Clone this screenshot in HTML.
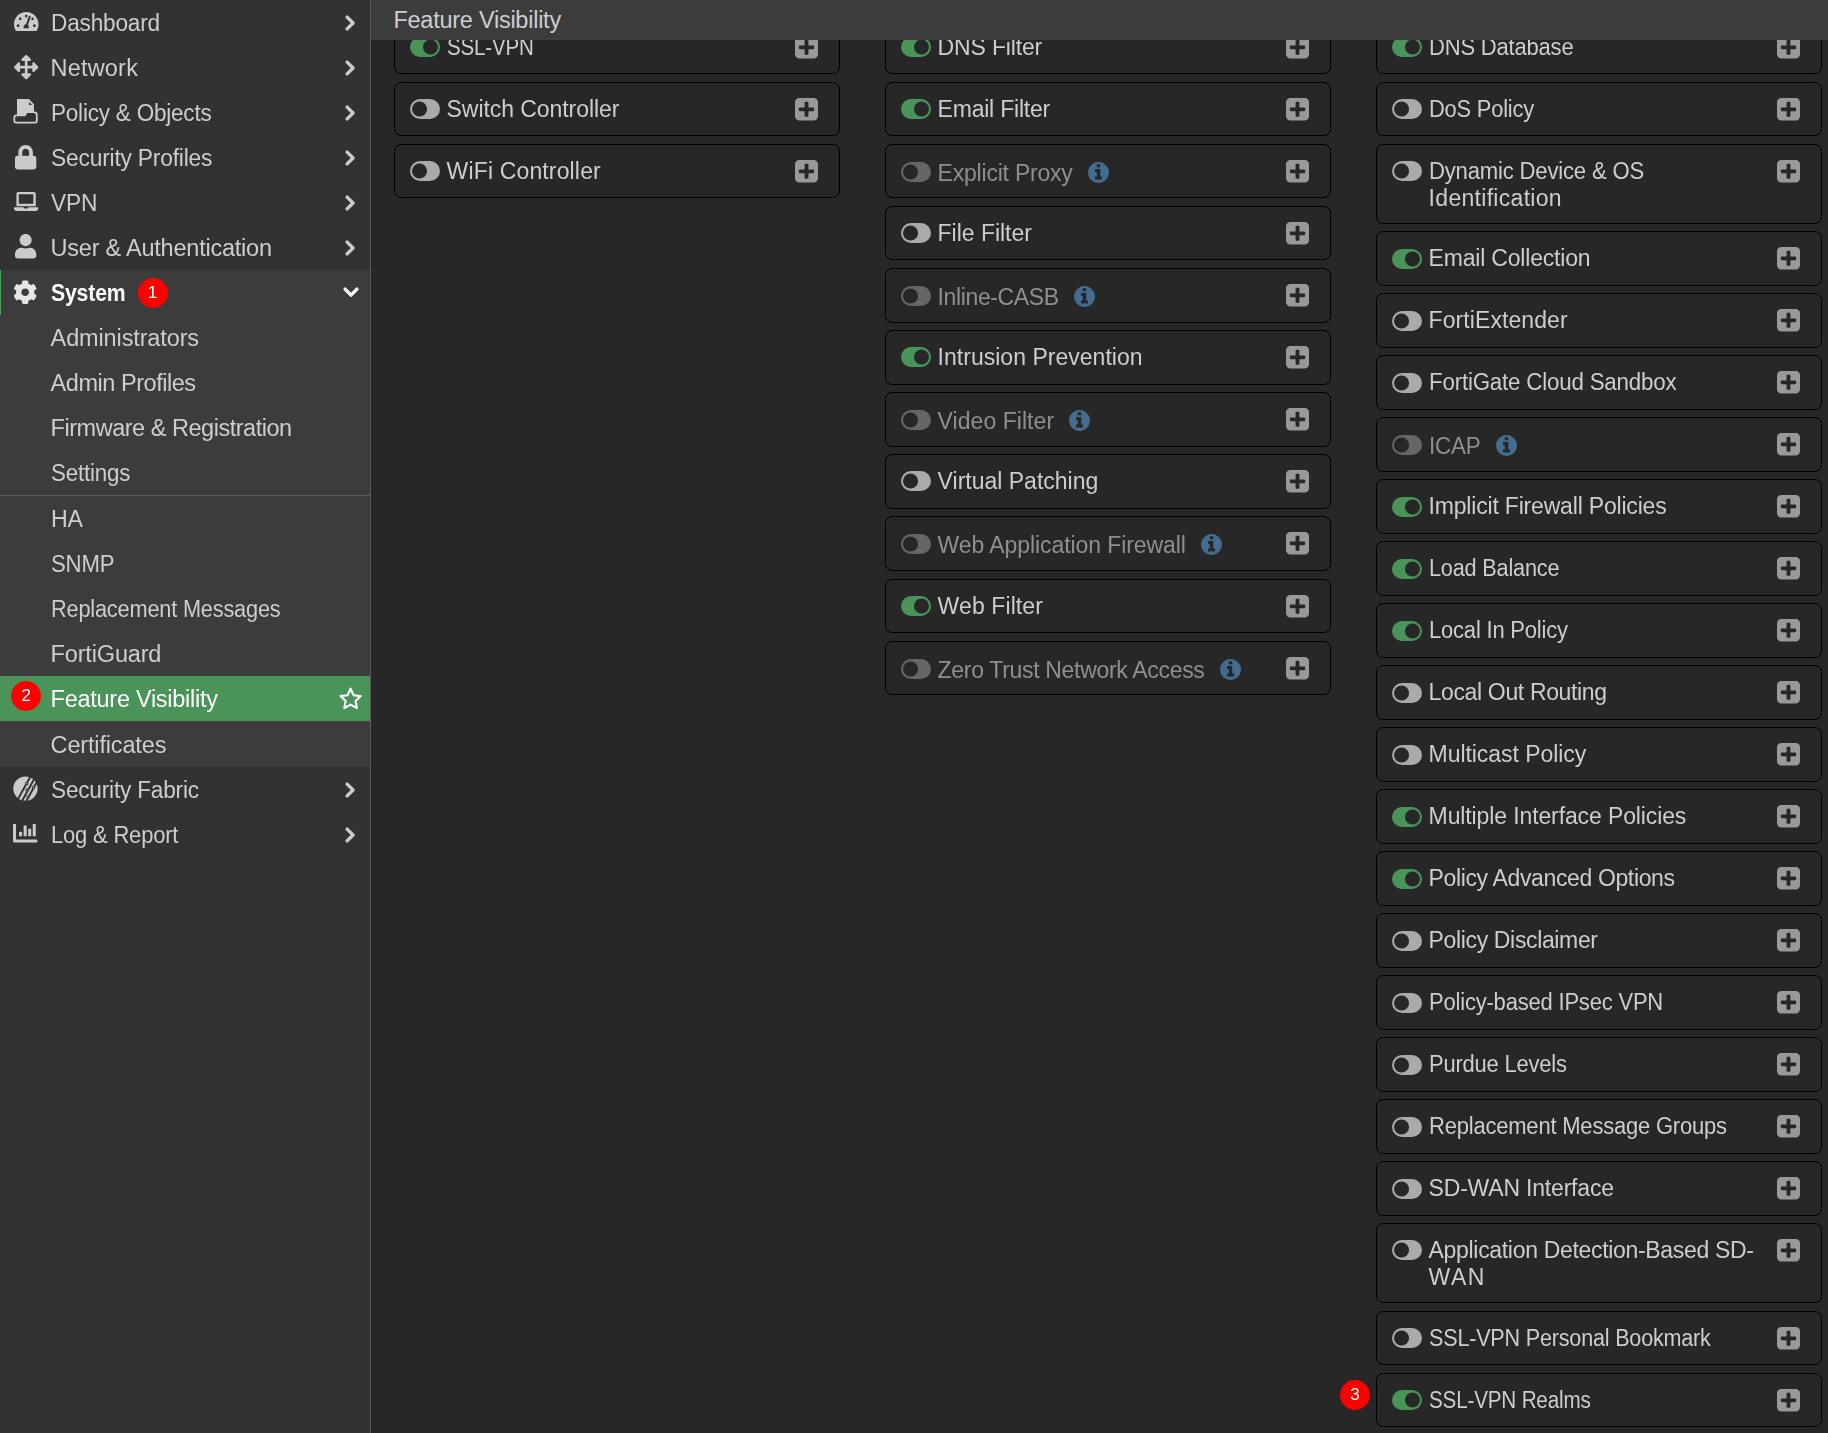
<!DOCTYPE html>
<html lang="en"><head><meta charset="utf-8"><title>Feature Visibility</title>
<style>
html,body{margin:0;padding:0}
body{width:1828px;height:1433px;overflow:hidden;background:#272727;position:relative;font-family:"Liberation Sans",sans-serif;font-size:23px;color:#cdcdcd}
.n,.nb,.h{font-size:23.5px}
.c{font-size:23px}
.ic{position:absolute;display:block;overflow:visible}
#side{position:absolute;left:0;top:0;width:370px;height:1433px;background:#323232;border-right:1px solid #595959;will-change:transform}
#main{position:absolute;left:0;top:0;width:1828px;height:1433px;will-change:transform}
.nav{position:absolute;left:0;width:370px;height:45px;line-height:45px;white-space:nowrap}
.nav .t{position:absolute;left:50.6px;top:1px}
.t{display:inline-block;white-space:nowrap;transform-origin:0 50%}
#subbg{position:absolute;left:0;top:270px;width:370px;height:497px;background:#3c3c3c}
#sysbar{position:absolute;left:0;top:270px;width:1px;height:45px;background:#4aa35f}
#sel{position:absolute;left:0;top:676px;width:370px;height:45px;background:#4a945a}
#selb{position:absolute;left:0;top:721px;width:370px;height:1px;background:#474747}
#div{position:absolute;left:0;top:495px;width:370px;height:1px;background:#5c5c5c}
.badge{position:absolute;width:30px;height:30px;border-radius:15px;background:#fe0000;color:#fff;font-size:17px;line-height:30px;text-align:center}
#hdr{position:absolute;left:371px;top:0;width:1457px;height:40px;background:#3c3c3c;z-index:5}
#side{z-index:4}
#hdr .t{position:absolute;left:22.4px;top:1px;line-height:39px;color:#cdcdcd}
.card{position:absolute;width:446px;border:1px solid #000;border-radius:7px;box-sizing:border-box}
.card .lbl{position:absolute;left:51.6px;top:13px;line-height:27px}
.card .ml .t{display:block}
.card.dis .lbl{color:#8f8f8f;top:15px}
.card.dis .tg{top:17px}
.card.k3 .tg{top:17px}
.tg{position:absolute;left:15px;top:16px;width:30px;height:20px;border-radius:10px;background:#aaa;box-sizing:border-box}
.tg i{position:absolute;left:2px;top:2px;width:16px;height:16px;border-radius:8px;background:#272727;transform:scale(.94);transform-origin:3% 50%}
.tg.on{background:#4a945a}
.tg.on i{left:12px;transform-origin:97% 50%}
.dis .tg{background:#666}
</style></head><body>

<div id="side">
<div id="subbg"></div><div id="sysbar"></div><div id="sel"></div><div id="selb"></div><div id="div"></div>
<div class="nav" style="top:0px"><span class="t n" style="letter-spacing:-0.200px;transform:scaleX(0.9625)">Dashboard</span></div>
<svg class="ic" style="left:13.8px;top:11.9px;width:24.5px;height:19.1px" viewBox="0 32 576 448" preserveAspectRatio="none"><path fill="#cbcbcb" d="M288 32C128.94 32 0 160.94 0 320c0 52.8 14.25 102.26 39.06 144.8 5.61 9.62 16.3 15.2 27.44 15.2h443c11.14 0 21.83-5.58 27.44-15.2C561.75 422.26 576 372.8 576 320c0-159.06-128.94-288-288-288zm0 64c14.71 0 26.58 10.13 30.32 23.65-1.11 2.26-2.64 4.23-3.45 6.67l-9.22 27.67c-5.13 3.49-10.97 6.01-17.64 6.01-17.67 0-32-14.33-32-32S270.33 96 288 96zM96 384c-17.67 0-32-14.33-32-32s14.33-32 32-32 32 14.33 32 32-14.33 32-32 32zm48-160c-17.67 0-32-14.33-32-32s14.33-32 32-32 32 14.33 32 32-14.33 32-32 32zm246.77-72.41l-61.33 184C343.13 347.33 352 364.54 352 384c0 11.72-3.38 22.55-8.88 32H232.88c-5.5-9.45-8.88-20.28-8.88-32 0-33.94 26.5-61.43 59.9-63.59l61.34-184.01c4.17-12.56 17.73-19.45 30.36-15.17 12.57 4.19 19.35 17.79 15.17 30.36zm14.66 57.2l15.52-46.55c3.47-1.29 7.13-2.23 11.05-2.23 17.67 0 32 14.33 32 32s-14.33 32-32 32c-11.38-.01-20.89-6.28-26.57-15.22zM480 384c-17.67 0-32-14.33-32-32s14.33-32 32-32 32 14.33 32 32-14.33 32-32 32z"/></svg>
<svg class="ic" style="left:345.3px;top:14.5px;width:10.4px;height:16px" viewBox="0 0 10.4 16" preserveAspectRatio="none"><path d="M2.1 2.1L8.1 8L2.1 13.9" fill="none" stroke="#cbcbcb" stroke-width="3.4" stroke-linecap="round" stroke-linejoin="round"/></svg>
<div class="nav" style="top:45px"><span class="t n" style="letter-spacing:0.183px">Network</span></div>
<svg class="ic" style="left:13.8px;top:54.5px;width:24.4px;height:24.4px" viewBox="0 0 512 512" preserveAspectRatio="none"><path fill="#cbcbcb" d="M352.201 425.775l-79.196 79.196c-9.373 9.373-24.568 9.373-33.941 0l-79.196-79.196c-15.119-15.119-4.411-40.971 16.971-40.97h51.162L228 284H127.196v51.162c0 21.382-25.851 32.09-40.971 16.971L7.029 272.937c-9.373-9.373-9.373-24.569 0-33.941L86.225 159.8c15.119-15.119 40.971-4.411 40.971 16.971V228H228V127.196h-51.23c-21.382 0-32.09-25.851-16.971-40.971l79.196-79.196c9.373-9.373 24.568-9.373 33.941 0l79.196 79.196c15.119 15.119 4.411 40.971-16.971 40.971h-51.162V228h100.804v-51.162c0-21.382 25.851-32.09 40.97-16.971l79.196 79.196c9.373 9.373 9.373 24.569 0 33.941L425.773 352.2c-15.119 15.119-40.971 4.411-40.97-16.971V284H284v100.804h51.23c21.382 0 32.09 25.851 16.971 40.971z"/></svg>
<svg class="ic" style="left:345.3px;top:59.5px;width:10.4px;height:16px" viewBox="0 0 10.4 16" preserveAspectRatio="none"><path d="M2.1 2.1L8.1 8L2.1 13.9" fill="none" stroke="#cbcbcb" stroke-width="3.4" stroke-linecap="round" stroke-linejoin="round"/></svg>
<div class="nav" style="top:90px"><span class="t n" style="letter-spacing:-0.200px;transform:scaleX(0.9560)">Policy &amp; Objects</span></div>
<svg class="ic" style="left:5px;top:92px;width:40px;height:40px" viewBox="0 0 40 40" preserveAspectRatio="none"><path fill="#cbcbcb" fill-rule="evenodd" d="M12 7H24L29 12.2V21H22.4L20.3 24.3H12Z M24.1 9.9V12.9H27.1Z"/><path fill="none" stroke="#cbcbcb" stroke-width="1.8" stroke-linejoin="round" d="M12.2 23.3H11.6A2.3 2.3 0 0 0 9.3 25.6V28.4A2.3 2.3 0 0 0 11.6 30.7H29.5A2.3 2.3 0 0 0 31.8 28.4V22.8A2.3 2.3 0 0 0 29.5 20.5H29"/></svg>
<svg class="ic" style="left:345.3px;top:104.5px;width:10.4px;height:16px" viewBox="0 0 10.4 16" preserveAspectRatio="none"><path d="M2.1 2.1L8.1 8L2.1 13.9" fill="none" stroke="#cbcbcb" stroke-width="3.4" stroke-linecap="round" stroke-linejoin="round"/></svg>
<div class="nav" style="top:135px"><span class="t n" style="letter-spacing:-0.200px;transform:scaleX(0.9693)">Security Profiles</span></div>
<svg class="ic" style="left:15px;top:144.8px;width:21.3px;height:24.4px" viewBox="0 0 448 512" preserveAspectRatio="none"><path fill="#cbcbcb" d="M400 224h-24v-72C376 68.2 307.8 0 224 0S72 68.2 72 152v72H48c-26.5 0-48 21.5-48 48v192c0 26.5 21.5 48 48 48h352c26.5 0 48-21.5 48-48V272c0-26.5-21.5-48-48-48zm-104 0H152v-72c0-39.7 32.3-72 72-72s72 32.3 72 72v72z"/></svg>
<svg class="ic" style="left:345.3px;top:149.5px;width:10.4px;height:16px" viewBox="0 0 10.4 16" preserveAspectRatio="none"><path d="M2.1 2.1L8.1 8L2.1 13.9" fill="none" stroke="#cbcbcb" stroke-width="3.4" stroke-linecap="round" stroke-linejoin="round"/></svg>
<div class="nav" style="top:180px"><span class="t n" style="letter-spacing:-0.200px;transform:scaleX(0.9675)">VPN</span></div>
<svg class="ic" style="left:13.5px;top:191.7px;width:24.2px;height:18.9px" viewBox="0 0 640 512" preserveAspectRatio="none"><path fill="#cbcbcb" d="M624 416H381.54c-.74 19.81-14.71 32-32.74 32H288c-18.69 0-33.02-17.47-32.77-32H16c-8.8 0-16 7.2-16 16v16c0 35.2 28.8 64 64 64h512c35.2 0 64-28.8 64-64v-16c0-8.8-7.2-16-16-16zM576 48c0-26.4-21.6-48-48-48H112C85.6 0 64 21.6 64 48v336h512V48zm-64 272H128V64h384v256z"/></svg>
<svg class="ic" style="left:345.3px;top:194.5px;width:10.4px;height:16px" viewBox="0 0 10.4 16" preserveAspectRatio="none"><path d="M2.1 2.1L8.1 8L2.1 13.9" fill="none" stroke="#cbcbcb" stroke-width="3.4" stroke-linecap="round" stroke-linejoin="round"/></svg>
<div class="nav" style="top:225px"><span class="t n" style="letter-spacing:-0.230px">User &amp; Authentication</span></div>
<svg class="ic" style="left:15px;top:234px;width:21.3px;height:24.4px" viewBox="0 0 448 512" preserveAspectRatio="none"><path fill="#cbcbcb" d="M224 256c70.7 0 128-57.3 128-128S294.7 0 224 0 96 57.3 96 128s57.3 128 128 128zm89.6 32h-16.7c-22.2 10.2-46.9 16-72.9 16s-50.6-5.8-72.9-16h-16.7C60.2 288 0 348.2 0 422.4V464c0 26.5 21.5 48 48 48h352c26.5 0 48-21.5 48-48v-41.6c0-74.2-60.2-134.4-134.4-134.4z"/></svg>
<svg class="ic" style="left:345.3px;top:239.5px;width:10.4px;height:16px" viewBox="0 0 10.4 16" preserveAspectRatio="none"><path d="M2.1 2.1L8.1 8L2.1 13.9" fill="none" stroke="#cbcbcb" stroke-width="3.4" stroke-linecap="round" stroke-linejoin="round"/></svg>
<div class="nav" style="top:270px;color:#fff;font-weight:bold"><span class="t nb" style="letter-spacing:-0.200px;transform:scaleX(0.9035)">System</span></div>
<svg class="ic" style="left:13.3px;top:279.5px;width:24.4px;height:24.4px" viewBox="0 0 512 512" preserveAspectRatio="none"><path fill="#e6e6e6" d="M487.4 315.7l-42.6-24.6c4.3-23.2 4.3-47 0-70.2l42.6-24.6c4.9-2.8 7.1-8.6 5.5-14-11.1-35.6-30-67.8-54.7-94.6-3.8-4.1-10-5.1-14.8-2.3L380.8 110c-17.9-15.4-38.5-27.3-60.8-35.1V25.8c0-5.6-3.9-10.5-9.4-11.7-36.7-8.2-74.3-7.8-109.2 0-5.5 1.2-9.4 6.1-9.4 11.7V75c-22.2 7.9-42.8 19.8-60.8 35.1L88.7 85.5c-4.9-2.8-11-1.9-14.8 2.3-24.7 26.7-43.6 58.9-54.7 94.6-1.7 5.4.6 11.2 5.5 14L67.3 221c-4.3 23.2-4.3 47 0 70.2l-42.6 24.6c-4.9 2.8-7.1 8.6-5.5 14 11.1 35.6 30 67.8 54.7 94.6 3.8 4.1 10 5.1 14.8 2.3l42.6-24.6c17.9 15.4 38.5 27.3 60.8 35.1v49.2c0 5.6 3.9 10.5 9.4 11.7 36.7 8.2 74.3 7.8 109.2 0 5.5-1.2 9.4-6.1 9.4-11.7v-49.2c22.2-7.9 42.8-19.8 60.8-35.1l42.6 24.6c4.9 2.8 11 1.9 14.8-2.3 24.7-26.7 43.6-58.9 54.7-94.6 1.5-5.5-.7-11.3-5.6-14.1zM256 336c-44.1 0-80-35.9-80-80s35.9-80 80-80 80 35.9 80 80-35.9 80-80 80z"/></svg>
<svg class="ic" style="left:342.5px;top:287.4px;width:16px;height:10.4px" viewBox="0 0 16 10.4" preserveAspectRatio="none"><path d="M2.1 2.1L8 8.1L13.9 2.1" fill="none" stroke="#fff" stroke-width="3.4" stroke-linecap="round" stroke-linejoin="round"/></svg>
<div class="badge" style="left:137.6px;top:277.5px">1</div>
<div class="nav" style="top:315px"><span class="t n" style="letter-spacing:-0.130px">Administrators</span></div>
<div class="nav" style="top:360px"><span class="t n" style="letter-spacing:-0.461px">Admin Profiles</span></div>
<div class="nav" style="top:405px"><span class="t n" style="letter-spacing:-0.479px">Firmware &amp; Registration</span></div>
<div class="nav" style="top:450px"><span class="t n" style="letter-spacing:-0.200px;transform:scaleX(0.9500)">Settings</span></div>
<div class="nav" style="top:496px"><span class="t n" style="letter-spacing:-0.200px;transform:scaleX(0.9868)">HA</span></div>
<div class="nav" style="top:541px"><span class="t n" style="letter-spacing:-0.200px;transform:scaleX(0.9442)">SNMP</span></div>
<div class="nav" style="top:586px"><span class="t n" style="letter-spacing:-0.200px;transform:scaleX(0.9250)">Replacement Messages</span></div>
<div class="nav" style="top:631px"><span class="t n" style="letter-spacing:-0.163px">FortiGuard</span></div>
<div class="nav" style="top:676px;color:#fff"><span class="t n" style="letter-spacing:-0.272px">Feature Visibility</span></div>
<div class="badge" style="left:11.3px;top:681.3px">2</div>
<svg class="ic" style="left:338px;top:686px;width:26px;height:26px" viewBox="0 0 26 26" preserveAspectRatio="none"><path d="M12.60 2.70L15.66 9.19L22.78 10.09L17.55 15.01L18.89 22.06L12.60 18.60L6.31 22.06L7.65 15.01L2.42 10.09L9.54 9.19Z" fill="none" stroke="#fff" stroke-width="2.1" stroke-linejoin="round"/></svg>
<div class="nav" style="top:722px"><span class="t n" style="letter-spacing:-0.158px">Certificates</span></div>
<div class="nav" style="top:767px"><span class="t n" style="letter-spacing:-0.200px;transform:scaleX(0.9617)">Security Fabric</span></div>
<svg class="ic" style="left:5px;top:769px;width:40px;height:40px" viewBox="0 0 40 40" preserveAspectRatio="none"><circle cx="20.45" cy="19.6" r="12.15" fill="#cbcbcb"/><g stroke="#323232" stroke-width="1.9" fill="none"><path d="M13 30L26 6.5"/><path d="M17 32L30 8.5"/><path d="M20.8 33L33.8 9.5"/></g><g fill="#323232"><circle cx="21.8" cy="14.6" r="1.7"/><circle cx="22" cy="21" r="1.7"/><circle cx="28.4" cy="18.4" r="1.7"/><circle cx="23" cy="27.9" r="1.7"/></g><g fill="#cbcbcb"><circle cx="21.8" cy="14.6" r="0.7"/><circle cx="22" cy="21" r="0.7"/><circle cx="28.4" cy="18.4" r="0.7"/><circle cx="23" cy="27.9" r="0.7"/></g></svg>
<svg class="ic" style="left:345.3px;top:781.5px;width:10.4px;height:16px" viewBox="0 0 10.4 16" preserveAspectRatio="none"><path d="M2.1 2.1L8.1 8L2.1 13.9" fill="none" stroke="#cbcbcb" stroke-width="3.4" stroke-linecap="round" stroke-linejoin="round"/></svg>
<div class="nav" style="top:812px"><span class="t n" style="letter-spacing:-0.200px;transform:scaleX(0.9354)">Log &amp; Report</span></div>
<svg class="ic" style="left:13.4px;top:824.2px;width:24.3px;height:18.5px" viewBox="0 64 512 384" preserveAspectRatio="none"><path fill="#cbcbcb" d="M332.8 320h38.4c6.4 0 12.8-6.4 12.8-12.8V172.8c0-6.4-6.4-12.8-12.8-12.8h-38.4c-6.4 0-12.8 6.4-12.8 12.8v134.4c0 6.4 6.4 12.8 12.8 12.8zm96 0h38.4c6.4 0 12.8-6.4 12.8-12.8V76.8c0-6.4-6.4-12.8-12.8-12.8h-38.4c-6.4 0-12.8 6.4-12.8 12.8v230.4c0 6.4 6.4 12.8 12.8 12.8zm-288 0h38.4c6.4 0 12.8-6.4 12.8-12.8v-70.4c0-6.4-6.4-12.8-12.8-12.8h-38.4c-6.4 0-12.8 6.4-12.8 12.8v70.4c0 6.4 6.4 12.8 12.8 12.8zm96 0h38.4c6.4 0 12.8-6.4 12.8-12.8V108.8c0-6.4-6.4-12.8-12.8-12.8h-38.4c-6.4 0-12.8 6.4-12.8 12.8v198.4c0 6.4 6.4 12.8 12.8 12.8zM496 384H64V80c0-8.84-7.16-16-16-16H16C7.16 64 0 71.16 0 80v336c0 17.67 14.33 32 32 32h464c8.84 0 16-7.16 16-16v-32c0-8.84-7.16-16-16-16z"/></svg>
<svg class="ic" style="left:345.3px;top:826.5px;width:10.4px;height:16px" viewBox="0 0 10.4 16" preserveAspectRatio="none"><path d="M2.1 2.1L8.1 8L2.1 13.9" fill="none" stroke="#cbcbcb" stroke-width="3.4" stroke-linecap="round" stroke-linejoin="round"/></svg>
</div>
<div id="hdr"><span class="t h" style="letter-spacing:-0.248px">Feature Visibility</span></div>
<div id="main">
<div class="card" style="left:394px;top:20px;height:54px"><div class="tg on"><i></i></div><div class="lbl"><span class="t c" style="letter-spacing:-0.200px;transform:scaleX(0.8939)">SSL-VPN</span></div></div>
<svg class="ic" style="left:795px;top:36px;width:23px;height:22.5px" viewBox="0 -1408 1536 1536" preserveAspectRatio="none" ><path fill="#999" transform="scale(1,-1)" d="M1280 576V704Q1280 730 1261.0 749.0Q1242 768 1216 768H896V1088Q896 1114 877.0 1133.0Q858 1152 832 1152H704Q678 1152 659.0 1133.0Q640 1114 640 1088V768H320Q294 768 275.0 749.0Q256 730 256 704V576Q256 550 275.0 531.0Q294 512 320 512H640V192Q640 166 659.0 147.0Q678 128 704 128H832Q858 128 877.0 147.0Q896 166 896 192V512H1216Q1242 512 1261.0 531.0Q1280 550 1280 576ZM1536 1120V160Q1536 41 1451.5 -43.5Q1367 -128 1248 -128H288Q169 -128 84.5 -43.5Q0 41 0 160V1120Q0 1239 84.5 1323.5Q169 1408 288 1408H1248Q1367 1408 1451.5 1323.5Q1536 1239 1536 1120Z"/></svg>
<div class="card" style="left:394px;top:82px;height:54px"><div class="tg"><i></i></div><div class="lbl"><span class="t c" style="letter-spacing:-0.063px">Switch Controller</span></div></div>
<svg class="ic" style="left:795px;top:98px;width:23px;height:22.5px" viewBox="0 -1408 1536 1536" preserveAspectRatio="none" ><path fill="#999" transform="scale(1,-1)" d="M1280 576V704Q1280 730 1261.0 749.0Q1242 768 1216 768H896V1088Q896 1114 877.0 1133.0Q858 1152 832 1152H704Q678 1152 659.0 1133.0Q640 1114 640 1088V768H320Q294 768 275.0 749.0Q256 730 256 704V576Q256 550 275.0 531.0Q294 512 320 512H640V192Q640 166 659.0 147.0Q678 128 704 128H832Q858 128 877.0 147.0Q896 166 896 192V512H1216Q1242 512 1261.0 531.0Q1280 550 1280 576ZM1536 1120V160Q1536 41 1451.5 -43.5Q1367 -128 1248 -128H288Q169 -128 84.5 -43.5Q0 41 0 160V1120Q0 1239 84.5 1323.5Q169 1408 288 1408H1248Q1367 1408 1451.5 1323.5Q1536 1239 1536 1120Z"/></svg>
<div class="card" style="left:394px;top:144px;height:54px"><div class="tg"><i></i></div><div class="lbl"><span class="t c" style="letter-spacing:0.147px">WiFi Controller</span></div></div>
<svg class="ic" style="left:795px;top:160px;width:23px;height:22.5px" viewBox="0 -1408 1536 1536" preserveAspectRatio="none" ><path fill="#999" transform="scale(1,-1)" d="M1280 576V704Q1280 730 1261.0 749.0Q1242 768 1216 768H896V1088Q896 1114 877.0 1133.0Q858 1152 832 1152H704Q678 1152 659.0 1133.0Q640 1114 640 1088V768H320Q294 768 275.0 749.0Q256 730 256 704V576Q256 550 275.0 531.0Q294 512 320 512H640V192Q640 166 659.0 147.0Q678 128 704 128H832Q858 128 877.0 147.0Q896 166 896 192V512H1216Q1242 512 1261.0 531.0Q1280 550 1280 576ZM1536 1120V160Q1536 41 1451.5 -43.5Q1367 -128 1248 -128H288Q169 -128 84.5 -43.5Q0 41 0 160V1120Q0 1239 84.5 1323.5Q169 1408 288 1408H1248Q1367 1408 1451.5 1323.5Q1536 1239 1536 1120Z"/></svg>
<div class="card" style="left:885px;top:20px;height:54px"><div class="tg on"><i></i></div><div class="lbl"><span class="t c" style="letter-spacing:-0.166px">DNS Filter</span></div></div>
<svg class="ic" style="left:1286px;top:36px;width:23px;height:22.5px" viewBox="0 -1408 1536 1536" preserveAspectRatio="none" ><path fill="#999" transform="scale(1,-1)" d="M1280 576V704Q1280 730 1261.0 749.0Q1242 768 1216 768H896V1088Q896 1114 877.0 1133.0Q858 1152 832 1152H704Q678 1152 659.0 1133.0Q640 1114 640 1088V768H320Q294 768 275.0 749.0Q256 730 256 704V576Q256 550 275.0 531.0Q294 512 320 512H640V192Q640 166 659.0 147.0Q678 128 704 128H832Q858 128 877.0 147.0Q896 166 896 192V512H1216Q1242 512 1261.0 531.0Q1280 550 1280 576ZM1536 1120V160Q1536 41 1451.5 -43.5Q1367 -128 1248 -128H288Q169 -128 84.5 -43.5Q0 41 0 160V1120Q0 1239 84.5 1323.5Q169 1408 288 1408H1248Q1367 1408 1451.5 1323.5Q1536 1239 1536 1120Z"/></svg>
<div class="card" style="left:885px;top:82px;height:54px"><div class="tg on"><i></i></div><div class="lbl"><span class="t c" style="letter-spacing:-0.219px">Email Filter</span></div></div>
<svg class="ic" style="left:1286px;top:98px;width:23px;height:22.5px" viewBox="0 -1408 1536 1536" preserveAspectRatio="none" ><path fill="#999" transform="scale(1,-1)" d="M1280 576V704Q1280 730 1261.0 749.0Q1242 768 1216 768H896V1088Q896 1114 877.0 1133.0Q858 1152 832 1152H704Q678 1152 659.0 1133.0Q640 1114 640 1088V768H320Q294 768 275.0 749.0Q256 730 256 704V576Q256 550 275.0 531.0Q294 512 320 512H640V192Q640 166 659.0 147.0Q678 128 704 128H832Q858 128 877.0 147.0Q896 166 896 192V512H1216Q1242 512 1261.0 531.0Q1280 550 1280 576ZM1536 1120V160Q1536 41 1451.5 -43.5Q1367 -128 1248 -128H288Q169 -128 84.5 -43.5Q0 41 0 160V1120Q0 1239 84.5 1323.5Q169 1408 288 1408H1248Q1367 1408 1451.5 1323.5Q1536 1239 1536 1120Z"/></svg>
<div class="card dis" style="left:885px;top:144px;height:54px"><div class="tg"><i></i></div><div class="lbl"><span class="t c" style="letter-spacing:-0.212px">Explicit Proxy</span></div></div>
<svg class="ic" style="left:1286px;top:160px;width:23px;height:22.5px" viewBox="0 -1408 1536 1536" preserveAspectRatio="none" ><path fill="#999" transform="scale(1,-1)" d="M1280 576V704Q1280 730 1261.0 749.0Q1242 768 1216 768H896V1088Q896 1114 877.0 1133.0Q858 1152 832 1152H704Q678 1152 659.0 1133.0Q640 1114 640 1088V768H320Q294 768 275.0 749.0Q256 730 256 704V576Q256 550 275.0 531.0Q294 512 320 512H640V192Q640 166 659.0 147.0Q678 128 704 128H832Q858 128 877.0 147.0Q896 166 896 192V512H1216Q1242 512 1261.0 531.0Q1280 550 1280 576ZM1536 1120V160Q1536 41 1451.5 -43.5Q1367 -128 1248 -128H288Q169 -128 84.5 -43.5Q0 41 0 160V1120Q0 1239 84.5 1323.5Q169 1408 288 1408H1248Q1367 1408 1451.5 1323.5Q1536 1239 1536 1120Z"/></svg>
<svg class="ic" style="left:1088.3000000000002px;top:161.8px;width:21px;height:21px" viewBox="0 -1408 1536 1536" preserveAspectRatio="none" ><path fill="#436c8f" transform="scale(1,-1)" d="M1024 160V320Q1024 334 1015.0 343.0Q1006 352 992 352H896V864Q896 878 887.0 887.0Q878 896 864 896H544Q530 896 521.0 887.0Q512 878 512 864V704Q512 690 521.0 681.0Q530 672 544 672H640V352H544Q530 352 521.0 343.0Q512 334 512 320V160Q512 146 521.0 137.0Q530 128 544 128H992Q1006 128 1015.0 137.0Q1024 146 1024 160ZM896 1056V1216Q896 1230 887.0 1239.0Q878 1248 864 1248H672Q658 1248 649.0 1239.0Q640 1230 640 1216V1056Q640 1042 649.0 1033.0Q658 1024 672 1024H864Q878 1024 887.0 1033.0Q896 1042 896 1056ZM1433.0 1025.5Q1536 849 1536.0 640.0Q1536 431 1433.0 254.5Q1330 78 1153.5 -25.0Q977 -128 768.0 -128.0Q559 -128 382.5 -25.0Q206 78 103.0 254.5Q0 431 0.0 640.0Q0 849 103.0 1025.5Q206 1202 382.5 1305.0Q559 1408 768.0 1408.0Q977 1408 1153.5 1305.0Q1330 1202 1433.0 1025.5Z"/></svg>
<div class="card" style="left:885px;top:206px;height:54px"><div class="tg"><i></i></div><div class="lbl"><span class="t c" style="letter-spacing:-0.028px">File Filter</span></div></div>
<svg class="ic" style="left:1286px;top:222px;width:23px;height:22.5px" viewBox="0 -1408 1536 1536" preserveAspectRatio="none" ><path fill="#999" transform="scale(1,-1)" d="M1280 576V704Q1280 730 1261.0 749.0Q1242 768 1216 768H896V1088Q896 1114 877.0 1133.0Q858 1152 832 1152H704Q678 1152 659.0 1133.0Q640 1114 640 1088V768H320Q294 768 275.0 749.0Q256 730 256 704V576Q256 550 275.0 531.0Q294 512 320 512H640V192Q640 166 659.0 147.0Q678 128 704 128H832Q858 128 877.0 147.0Q896 166 896 192V512H1216Q1242 512 1261.0 531.0Q1280 550 1280 576ZM1536 1120V160Q1536 41 1451.5 -43.5Q1367 -128 1248 -128H288Q169 -128 84.5 -43.5Q0 41 0 160V1120Q0 1239 84.5 1323.5Q169 1408 288 1408H1248Q1367 1408 1451.5 1323.5Q1536 1239 1536 1120Z"/></svg>
<div class="card dis" style="left:885px;top:268px;height:55px"><div class="tg"><i></i></div><div class="lbl"><span class="t c" style="letter-spacing:-0.381px">Inline-CASB</span></div></div>
<svg class="ic" style="left:1286px;top:284px;width:23px;height:22.5px" viewBox="0 -1408 1536 1536" preserveAspectRatio="none" ><path fill="#999" transform="scale(1,-1)" d="M1280 576V704Q1280 730 1261.0 749.0Q1242 768 1216 768H896V1088Q896 1114 877.0 1133.0Q858 1152 832 1152H704Q678 1152 659.0 1133.0Q640 1114 640 1088V768H320Q294 768 275.0 749.0Q256 730 256 704V576Q256 550 275.0 531.0Q294 512 320 512H640V192Q640 166 659.0 147.0Q678 128 704 128H832Q858 128 877.0 147.0Q896 166 896 192V512H1216Q1242 512 1261.0 531.0Q1280 550 1280 576ZM1536 1120V160Q1536 41 1451.5 -43.5Q1367 -128 1248 -128H288Q169 -128 84.5 -43.5Q0 41 0 160V1120Q0 1239 84.5 1323.5Q169 1408 288 1408H1248Q1367 1408 1451.5 1323.5Q1536 1239 1536 1120Z"/></svg>
<svg class="ic" style="left:1073.6000000000001px;top:285.8px;width:21px;height:21px" viewBox="0 -1408 1536 1536" preserveAspectRatio="none" ><path fill="#436c8f" transform="scale(1,-1)" d="M1024 160V320Q1024 334 1015.0 343.0Q1006 352 992 352H896V864Q896 878 887.0 887.0Q878 896 864 896H544Q530 896 521.0 887.0Q512 878 512 864V704Q512 690 521.0 681.0Q530 672 544 672H640V352H544Q530 352 521.0 343.0Q512 334 512 320V160Q512 146 521.0 137.0Q530 128 544 128H992Q1006 128 1015.0 137.0Q1024 146 1024 160ZM896 1056V1216Q896 1230 887.0 1239.0Q878 1248 864 1248H672Q658 1248 649.0 1239.0Q640 1230 640 1216V1056Q640 1042 649.0 1033.0Q658 1024 672 1024H864Q878 1024 887.0 1033.0Q896 1042 896 1056ZM1433.0 1025.5Q1536 849 1536.0 640.0Q1536 431 1433.0 254.5Q1330 78 1153.5 -25.0Q977 -128 768.0 -128.0Q559 -128 382.5 -25.0Q206 78 103.0 254.5Q0 431 0.0 640.0Q0 849 103.0 1025.5Q206 1202 382.5 1305.0Q559 1408 768.0 1408.0Q977 1408 1153.5 1305.0Q1330 1202 1433.0 1025.5Z"/></svg>
<div class="card" style="left:885px;top:330px;height:55px"><div class="tg on"><i></i></div><div class="lbl"><span class="t c" style="letter-spacing:0.019px">Intrusion Prevention</span></div></div>
<svg class="ic" style="left:1286px;top:346px;width:23px;height:22.5px" viewBox="0 -1408 1536 1536" preserveAspectRatio="none" ><path fill="#999" transform="scale(1,-1)" d="M1280 576V704Q1280 730 1261.0 749.0Q1242 768 1216 768H896V1088Q896 1114 877.0 1133.0Q858 1152 832 1152H704Q678 1152 659.0 1133.0Q640 1114 640 1088V768H320Q294 768 275.0 749.0Q256 730 256 704V576Q256 550 275.0 531.0Q294 512 320 512H640V192Q640 166 659.0 147.0Q678 128 704 128H832Q858 128 877.0 147.0Q896 166 896 192V512H1216Q1242 512 1261.0 531.0Q1280 550 1280 576ZM1536 1120V160Q1536 41 1451.5 -43.5Q1367 -128 1248 -128H288Q169 -128 84.5 -43.5Q0 41 0 160V1120Q0 1239 84.5 1323.5Q169 1408 288 1408H1248Q1367 1408 1451.5 1323.5Q1536 1239 1536 1120Z"/></svg>
<div class="card dis" style="left:885px;top:392px;height:55px"><div class="tg"><i></i></div><div class="lbl"><span class="t c" style="letter-spacing:0.050px">Video Filter</span></div></div>
<svg class="ic" style="left:1286px;top:408px;width:23px;height:22.5px" viewBox="0 -1408 1536 1536" preserveAspectRatio="none" ><path fill="#999" transform="scale(1,-1)" d="M1280 576V704Q1280 730 1261.0 749.0Q1242 768 1216 768H896V1088Q896 1114 877.0 1133.0Q858 1152 832 1152H704Q678 1152 659.0 1133.0Q640 1114 640 1088V768H320Q294 768 275.0 749.0Q256 730 256 704V576Q256 550 275.0 531.0Q294 512 320 512H640V192Q640 166 659.0 147.0Q678 128 704 128H832Q858 128 877.0 147.0Q896 166 896 192V512H1216Q1242 512 1261.0 531.0Q1280 550 1280 576ZM1536 1120V160Q1536 41 1451.5 -43.5Q1367 -128 1248 -128H288Q169 -128 84.5 -43.5Q0 41 0 160V1120Q0 1239 84.5 1323.5Q169 1408 288 1408H1248Q1367 1408 1451.5 1323.5Q1536 1239 1536 1120Z"/></svg>
<svg class="ic" style="left:1069.2px;top:409.8px;width:21px;height:21px" viewBox="0 -1408 1536 1536" preserveAspectRatio="none" ><path fill="#436c8f" transform="scale(1,-1)" d="M1024 160V320Q1024 334 1015.0 343.0Q1006 352 992 352H896V864Q896 878 887.0 887.0Q878 896 864 896H544Q530 896 521.0 887.0Q512 878 512 864V704Q512 690 521.0 681.0Q530 672 544 672H640V352H544Q530 352 521.0 343.0Q512 334 512 320V160Q512 146 521.0 137.0Q530 128 544 128H992Q1006 128 1015.0 137.0Q1024 146 1024 160ZM896 1056V1216Q896 1230 887.0 1239.0Q878 1248 864 1248H672Q658 1248 649.0 1239.0Q640 1230 640 1216V1056Q640 1042 649.0 1033.0Q658 1024 672 1024H864Q878 1024 887.0 1033.0Q896 1042 896 1056ZM1433.0 1025.5Q1536 849 1536.0 640.0Q1536 431 1433.0 254.5Q1330 78 1153.5 -25.0Q977 -128 768.0 -128.0Q559 -128 382.5 -25.0Q206 78 103.0 254.5Q0 431 0.0 640.0Q0 849 103.0 1025.5Q206 1202 382.5 1305.0Q559 1408 768.0 1408.0Q977 1408 1153.5 1305.0Q1330 1202 1433.0 1025.5Z"/></svg>
<div class="card" style="left:885px;top:454px;height:55px"><div class="tg"><i></i></div><div class="lbl"><span class="t c" style="letter-spacing:-0.000px">Virtual Patching</span></div></div>
<svg class="ic" style="left:1286px;top:470px;width:23px;height:22.5px" viewBox="0 -1408 1536 1536" preserveAspectRatio="none" ><path fill="#999" transform="scale(1,-1)" d="M1280 576V704Q1280 730 1261.0 749.0Q1242 768 1216 768H896V1088Q896 1114 877.0 1133.0Q858 1152 832 1152H704Q678 1152 659.0 1133.0Q640 1114 640 1088V768H320Q294 768 275.0 749.0Q256 730 256 704V576Q256 550 275.0 531.0Q294 512 320 512H640V192Q640 166 659.0 147.0Q678 128 704 128H832Q858 128 877.0 147.0Q896 166 896 192V512H1216Q1242 512 1261.0 531.0Q1280 550 1280 576ZM1536 1120V160Q1536 41 1451.5 -43.5Q1367 -128 1248 -128H288Q169 -128 84.5 -43.5Q0 41 0 160V1120Q0 1239 84.5 1323.5Q169 1408 288 1408H1248Q1367 1408 1451.5 1323.5Q1536 1239 1536 1120Z"/></svg>
<div class="card dis" style="left:885px;top:516px;height:55px"><div class="tg"><i></i></div><div class="lbl"><span class="t c" style="letter-spacing:-0.079px">Web Application Firewall</span></div></div>
<svg class="ic" style="left:1286px;top:532px;width:23px;height:22.5px" viewBox="0 -1408 1536 1536" preserveAspectRatio="none" ><path fill="#999" transform="scale(1,-1)" d="M1280 576V704Q1280 730 1261.0 749.0Q1242 768 1216 768H896V1088Q896 1114 877.0 1133.0Q858 1152 832 1152H704Q678 1152 659.0 1133.0Q640 1114 640 1088V768H320Q294 768 275.0 749.0Q256 730 256 704V576Q256 550 275.0 531.0Q294 512 320 512H640V192Q640 166 659.0 147.0Q678 128 704 128H832Q858 128 877.0 147.0Q896 166 896 192V512H1216Q1242 512 1261.0 531.0Q1280 550 1280 576ZM1536 1120V160Q1536 41 1451.5 -43.5Q1367 -128 1248 -128H288Q169 -128 84.5 -43.5Q0 41 0 160V1120Q0 1239 84.5 1323.5Q169 1408 288 1408H1248Q1367 1408 1451.5 1323.5Q1536 1239 1536 1120Z"/></svg>
<svg class="ic" style="left:1200.8000000000002px;top:533.8px;width:21px;height:21px" viewBox="0 -1408 1536 1536" preserveAspectRatio="none" ><path fill="#436c8f" transform="scale(1,-1)" d="M1024 160V320Q1024 334 1015.0 343.0Q1006 352 992 352H896V864Q896 878 887.0 887.0Q878 896 864 896H544Q530 896 521.0 887.0Q512 878 512 864V704Q512 690 521.0 681.0Q530 672 544 672H640V352H544Q530 352 521.0 343.0Q512 334 512 320V160Q512 146 521.0 137.0Q530 128 544 128H992Q1006 128 1015.0 137.0Q1024 146 1024 160ZM896 1056V1216Q896 1230 887.0 1239.0Q878 1248 864 1248H672Q658 1248 649.0 1239.0Q640 1230 640 1216V1056Q640 1042 649.0 1033.0Q658 1024 672 1024H864Q878 1024 887.0 1033.0Q896 1042 896 1056ZM1433.0 1025.5Q1536 849 1536.0 640.0Q1536 431 1433.0 254.5Q1330 78 1153.5 -25.0Q977 -128 768.0 -128.0Q559 -128 382.5 -25.0Q206 78 103.0 254.5Q0 431 0.0 640.0Q0 849 103.0 1025.5Q206 1202 382.5 1305.0Q559 1408 768.0 1408.0Q977 1408 1153.5 1305.0Q1330 1202 1433.0 1025.5Z"/></svg>
<div class="card" style="left:885px;top:579px;height:54px"><div class="tg on"><i></i></div><div class="lbl"><span class="t c" style="letter-spacing:0.103px">Web Filter</span></div></div>
<svg class="ic" style="left:1286px;top:595px;width:23px;height:22.5px" viewBox="0 -1408 1536 1536" preserveAspectRatio="none" ><path fill="#999" transform="scale(1,-1)" d="M1280 576V704Q1280 730 1261.0 749.0Q1242 768 1216 768H896V1088Q896 1114 877.0 1133.0Q858 1152 832 1152H704Q678 1152 659.0 1133.0Q640 1114 640 1088V768H320Q294 768 275.0 749.0Q256 730 256 704V576Q256 550 275.0 531.0Q294 512 320 512H640V192Q640 166 659.0 147.0Q678 128 704 128H832Q858 128 877.0 147.0Q896 166 896 192V512H1216Q1242 512 1261.0 531.0Q1280 550 1280 576ZM1536 1120V160Q1536 41 1451.5 -43.5Q1367 -128 1248 -128H288Q169 -128 84.5 -43.5Q0 41 0 160V1120Q0 1239 84.5 1323.5Q169 1408 288 1408H1248Q1367 1408 1451.5 1323.5Q1536 1239 1536 1120Z"/></svg>
<div class="card dis" style="left:885px;top:641px;height:54px"><div class="tg"><i></i></div><div class="lbl"><span class="t c" style="letter-spacing:-0.315px">Zero Trust Network Access</span></div></div>
<svg class="ic" style="left:1286px;top:657px;width:23px;height:22.5px" viewBox="0 -1408 1536 1536" preserveAspectRatio="none" ><path fill="#999" transform="scale(1,-1)" d="M1280 576V704Q1280 730 1261.0 749.0Q1242 768 1216 768H896V1088Q896 1114 877.0 1133.0Q858 1152 832 1152H704Q678 1152 659.0 1133.0Q640 1114 640 1088V768H320Q294 768 275.0 749.0Q256 730 256 704V576Q256 550 275.0 531.0Q294 512 320 512H640V192Q640 166 659.0 147.0Q678 128 704 128H832Q858 128 877.0 147.0Q896 166 896 192V512H1216Q1242 512 1261.0 531.0Q1280 550 1280 576ZM1536 1120V160Q1536 41 1451.5 -43.5Q1367 -128 1248 -128H288Q169 -128 84.5 -43.5Q0 41 0 160V1120Q0 1239 84.5 1323.5Q169 1408 288 1408H1248Q1367 1408 1451.5 1323.5Q1536 1239 1536 1120Z"/></svg>
<svg class="ic" style="left:1220.2px;top:658.8px;width:21px;height:21px" viewBox="0 -1408 1536 1536" preserveAspectRatio="none" ><path fill="#436c8f" transform="scale(1,-1)" d="M1024 160V320Q1024 334 1015.0 343.0Q1006 352 992 352H896V864Q896 878 887.0 887.0Q878 896 864 896H544Q530 896 521.0 887.0Q512 878 512 864V704Q512 690 521.0 681.0Q530 672 544 672H640V352H544Q530 352 521.0 343.0Q512 334 512 320V160Q512 146 521.0 137.0Q530 128 544 128H992Q1006 128 1015.0 137.0Q1024 146 1024 160ZM896 1056V1216Q896 1230 887.0 1239.0Q878 1248 864 1248H672Q658 1248 649.0 1239.0Q640 1230 640 1216V1056Q640 1042 649.0 1033.0Q658 1024 672 1024H864Q878 1024 887.0 1033.0Q896 1042 896 1056ZM1433.0 1025.5Q1536 849 1536.0 640.0Q1536 431 1433.0 254.5Q1330 78 1153.5 -25.0Q977 -128 768.0 -128.0Q559 -128 382.5 -25.0Q206 78 103.0 254.5Q0 431 0.0 640.0Q0 849 103.0 1025.5Q206 1202 382.5 1305.0Q559 1408 768.0 1408.0Q977 1408 1153.5 1305.0Q1330 1202 1433.0 1025.5Z"/></svg>
<div class="card" style="left:1376px;top:20px;height:54px"><div class="tg on"><i></i></div><div class="lbl"><span class="t c" style="letter-spacing:-0.200px;transform:scaleX(0.9566)">DNS Database</span></div></div>
<svg class="ic" style="left:1777px;top:36px;width:23px;height:22.5px" viewBox="0 -1408 1536 1536" preserveAspectRatio="none" ><path fill="#999" transform="scale(1,-1)" d="M1280 576V704Q1280 730 1261.0 749.0Q1242 768 1216 768H896V1088Q896 1114 877.0 1133.0Q858 1152 832 1152H704Q678 1152 659.0 1133.0Q640 1114 640 1088V768H320Q294 768 275.0 749.0Q256 730 256 704V576Q256 550 275.0 531.0Q294 512 320 512H640V192Q640 166 659.0 147.0Q678 128 704 128H832Q858 128 877.0 147.0Q896 166 896 192V512H1216Q1242 512 1261.0 531.0Q1280 550 1280 576ZM1536 1120V160Q1536 41 1451.5 -43.5Q1367 -128 1248 -128H288Q169 -128 84.5 -43.5Q0 41 0 160V1120Q0 1239 84.5 1323.5Q169 1408 288 1408H1248Q1367 1408 1451.5 1323.5Q1536 1239 1536 1120Z"/></svg>
<div class="card" style="left:1376px;top:82px;height:54px"><div class="tg"><i></i></div><div class="lbl"><span class="t c" style="letter-spacing:-0.200px;transform:scaleX(0.9500)">DoS Policy</span></div></div>
<svg class="ic" style="left:1777px;top:98px;width:23px;height:22.5px" viewBox="0 -1408 1536 1536" preserveAspectRatio="none" ><path fill="#999" transform="scale(1,-1)" d="M1280 576V704Q1280 730 1261.0 749.0Q1242 768 1216 768H896V1088Q896 1114 877.0 1133.0Q858 1152 832 1152H704Q678 1152 659.0 1133.0Q640 1114 640 1088V768H320Q294 768 275.0 749.0Q256 730 256 704V576Q256 550 275.0 531.0Q294 512 320 512H640V192Q640 166 659.0 147.0Q678 128 704 128H832Q858 128 877.0 147.0Q896 166 896 192V512H1216Q1242 512 1261.0 531.0Q1280 550 1280 576ZM1536 1120V160Q1536 41 1451.5 -43.5Q1367 -128 1248 -128H288Q169 -128 84.5 -43.5Q0 41 0 160V1120Q0 1239 84.5 1323.5Q169 1408 288 1408H1248Q1367 1408 1451.5 1323.5Q1536 1239 1536 1120Z"/></svg>
<div class="card" style="left:1376px;top:144px;height:80px"><div class="tg"><i></i></div><div class="lbl ml"><span class="t c" style="letter-spacing:-0.200px;transform:scaleX(0.9608)">Dynamic Device &amp; OS</span> <span class="t c" style="letter-spacing:0.300px">Identification</span></div></div>
<svg class="ic" style="left:1777px;top:160px;width:23px;height:22.5px" viewBox="0 -1408 1536 1536" preserveAspectRatio="none" ><path fill="#999" transform="scale(1,-1)" d="M1280 576V704Q1280 730 1261.0 749.0Q1242 768 1216 768H896V1088Q896 1114 877.0 1133.0Q858 1152 832 1152H704Q678 1152 659.0 1133.0Q640 1114 640 1088V768H320Q294 768 275.0 749.0Q256 730 256 704V576Q256 550 275.0 531.0Q294 512 320 512H640V192Q640 166 659.0 147.0Q678 128 704 128H832Q858 128 877.0 147.0Q896 166 896 192V512H1216Q1242 512 1261.0 531.0Q1280 550 1280 576ZM1536 1120V160Q1536 41 1451.5 -43.5Q1367 -128 1248 -128H288Q169 -128 84.5 -43.5Q0 41 0 160V1120Q0 1239 84.5 1323.5Q169 1408 288 1408H1248Q1367 1408 1451.5 1323.5Q1536 1239 1536 1120Z"/></svg>
<div class="card k3" style="left:1376px;top:231px;height:55px"><div class="tg on"><i></i></div><div class="lbl"><span class="t c" style="letter-spacing:-0.193px">Email Collection</span></div></div>
<svg class="ic" style="left:1777px;top:247px;width:23px;height:22.5px" viewBox="0 -1408 1536 1536" preserveAspectRatio="none" ><path fill="#999" transform="scale(1,-1)" d="M1280 576V704Q1280 730 1261.0 749.0Q1242 768 1216 768H896V1088Q896 1114 877.0 1133.0Q858 1152 832 1152H704Q678 1152 659.0 1133.0Q640 1114 640 1088V768H320Q294 768 275.0 749.0Q256 730 256 704V576Q256 550 275.0 531.0Q294 512 320 512H640V192Q640 166 659.0 147.0Q678 128 704 128H832Q858 128 877.0 147.0Q896 166 896 192V512H1216Q1242 512 1261.0 531.0Q1280 550 1280 576ZM1536 1120V160Q1536 41 1451.5 -43.5Q1367 -128 1248 -128H288Q169 -128 84.5 -43.5Q0 41 0 160V1120Q0 1239 84.5 1323.5Q169 1408 288 1408H1248Q1367 1408 1451.5 1323.5Q1536 1239 1536 1120Z"/></svg>
<div class="card k3" style="left:1376px;top:293px;height:55px"><div class="tg"><i></i></div><div class="lbl"><span class="t c" style="letter-spacing:0.077px">FortiExtender</span></div></div>
<svg class="ic" style="left:1777px;top:309px;width:23px;height:22.5px" viewBox="0 -1408 1536 1536" preserveAspectRatio="none" ><path fill="#999" transform="scale(1,-1)" d="M1280 576V704Q1280 730 1261.0 749.0Q1242 768 1216 768H896V1088Q896 1114 877.0 1133.0Q858 1152 832 1152H704Q678 1152 659.0 1133.0Q640 1114 640 1088V768H320Q294 768 275.0 749.0Q256 730 256 704V576Q256 550 275.0 531.0Q294 512 320 512H640V192Q640 166 659.0 147.0Q678 128 704 128H832Q858 128 877.0 147.0Q896 166 896 192V512H1216Q1242 512 1261.0 531.0Q1280 550 1280 576ZM1536 1120V160Q1536 41 1451.5 -43.5Q1367 -128 1248 -128H288Q169 -128 84.5 -43.5Q0 41 0 160V1120Q0 1239 84.5 1323.5Q169 1408 288 1408H1248Q1367 1408 1451.5 1323.5Q1536 1239 1536 1120Z"/></svg>
<div class="card k3" style="left:1376px;top:355px;height:55px"><div class="tg"><i></i></div><div class="lbl"><span class="t c" style="letter-spacing:-0.200px;transform:scaleX(0.9704)">FortiGate Cloud Sandbox</span></div></div>
<svg class="ic" style="left:1777px;top:371px;width:23px;height:22.5px" viewBox="0 -1408 1536 1536" preserveAspectRatio="none" ><path fill="#999" transform="scale(1,-1)" d="M1280 576V704Q1280 730 1261.0 749.0Q1242 768 1216 768H896V1088Q896 1114 877.0 1133.0Q858 1152 832 1152H704Q678 1152 659.0 1133.0Q640 1114 640 1088V768H320Q294 768 275.0 749.0Q256 730 256 704V576Q256 550 275.0 531.0Q294 512 320 512H640V192Q640 166 659.0 147.0Q678 128 704 128H832Q858 128 877.0 147.0Q896 166 896 192V512H1216Q1242 512 1261.0 531.0Q1280 550 1280 576ZM1536 1120V160Q1536 41 1451.5 -43.5Q1367 -128 1248 -128H288Q169 -128 84.5 -43.5Q0 41 0 160V1120Q0 1239 84.5 1323.5Q169 1408 288 1408H1248Q1367 1408 1451.5 1323.5Q1536 1239 1536 1120Z"/></svg>
<div class="card dis" style="left:1376px;top:417px;height:55px"><div class="tg"><i></i></div><div class="lbl"><span class="t c" style="letter-spacing:-0.200px;transform:scaleX(0.9732)">ICAP</span></div></div>
<svg class="ic" style="left:1777px;top:433px;width:23px;height:22.5px" viewBox="0 -1408 1536 1536" preserveAspectRatio="none" ><path fill="#999" transform="scale(1,-1)" d="M1280 576V704Q1280 730 1261.0 749.0Q1242 768 1216 768H896V1088Q896 1114 877.0 1133.0Q858 1152 832 1152H704Q678 1152 659.0 1133.0Q640 1114 640 1088V768H320Q294 768 275.0 749.0Q256 730 256 704V576Q256 550 275.0 531.0Q294 512 320 512H640V192Q640 166 659.0 147.0Q678 128 704 128H832Q858 128 877.0 147.0Q896 166 896 192V512H1216Q1242 512 1261.0 531.0Q1280 550 1280 576ZM1536 1120V160Q1536 41 1451.5 -43.5Q1367 -128 1248 -128H288Q169 -128 84.5 -43.5Q0 41 0 160V1120Q0 1239 84.5 1323.5Q169 1408 288 1408H1248Q1367 1408 1451.5 1323.5Q1536 1239 1536 1120Z"/></svg>
<svg class="ic" style="left:1495.8000000000002px;top:434.8px;width:21px;height:21px" viewBox="0 -1408 1536 1536" preserveAspectRatio="none" ><path fill="#436c8f" transform="scale(1,-1)" d="M1024 160V320Q1024 334 1015.0 343.0Q1006 352 992 352H896V864Q896 878 887.0 887.0Q878 896 864 896H544Q530 896 521.0 887.0Q512 878 512 864V704Q512 690 521.0 681.0Q530 672 544 672H640V352H544Q530 352 521.0 343.0Q512 334 512 320V160Q512 146 521.0 137.0Q530 128 544 128H992Q1006 128 1015.0 137.0Q1024 146 1024 160ZM896 1056V1216Q896 1230 887.0 1239.0Q878 1248 864 1248H672Q658 1248 649.0 1239.0Q640 1230 640 1216V1056Q640 1042 649.0 1033.0Q658 1024 672 1024H864Q878 1024 887.0 1033.0Q896 1042 896 1056ZM1433.0 1025.5Q1536 849 1536.0 640.0Q1536 431 1433.0 254.5Q1330 78 1153.5 -25.0Q977 -128 768.0 -128.0Q559 -128 382.5 -25.0Q206 78 103.0 254.5Q0 431 0.0 640.0Q0 849 103.0 1025.5Q206 1202 382.5 1305.0Q559 1408 768.0 1408.0Q977 1408 1153.5 1305.0Q1330 1202 1433.0 1025.5Z"/></svg>
<div class="card k3" style="left:1376px;top:479px;height:55px"><div class="tg on"><i></i></div><div class="lbl"><span class="t c" style="letter-spacing:-0.190px">Implicit Firewall Policies</span></div></div>
<svg class="ic" style="left:1777px;top:495px;width:23px;height:22.5px" viewBox="0 -1408 1536 1536" preserveAspectRatio="none" ><path fill="#999" transform="scale(1,-1)" d="M1280 576V704Q1280 730 1261.0 749.0Q1242 768 1216 768H896V1088Q896 1114 877.0 1133.0Q858 1152 832 1152H704Q678 1152 659.0 1133.0Q640 1114 640 1088V768H320Q294 768 275.0 749.0Q256 730 256 704V576Q256 550 275.0 531.0Q294 512 320 512H640V192Q640 166 659.0 147.0Q678 128 704 128H832Q858 128 877.0 147.0Q896 166 896 192V512H1216Q1242 512 1261.0 531.0Q1280 550 1280 576ZM1536 1120V160Q1536 41 1451.5 -43.5Q1367 -128 1248 -128H288Q169 -128 84.5 -43.5Q0 41 0 160V1120Q0 1239 84.5 1323.5Q169 1408 288 1408H1248Q1367 1408 1451.5 1323.5Q1536 1239 1536 1120Z"/></svg>
<div class="card k3" style="left:1376px;top:541px;height:55px"><div class="tg on"><i></i></div><div class="lbl"><span class="t c" style="letter-spacing:-0.200px;transform:scaleX(0.9428)">Load Balance</span></div></div>
<svg class="ic" style="left:1777px;top:557px;width:23px;height:22.5px" viewBox="0 -1408 1536 1536" preserveAspectRatio="none" ><path fill="#999" transform="scale(1,-1)" d="M1280 576V704Q1280 730 1261.0 749.0Q1242 768 1216 768H896V1088Q896 1114 877.0 1133.0Q858 1152 832 1152H704Q678 1152 659.0 1133.0Q640 1114 640 1088V768H320Q294 768 275.0 749.0Q256 730 256 704V576Q256 550 275.0 531.0Q294 512 320 512H640V192Q640 166 659.0 147.0Q678 128 704 128H832Q858 128 877.0 147.0Q896 166 896 192V512H1216Q1242 512 1261.0 531.0Q1280 550 1280 576ZM1536 1120V160Q1536 41 1451.5 -43.5Q1367 -128 1248 -128H288Q169 -128 84.5 -43.5Q0 41 0 160V1120Q0 1239 84.5 1323.5Q169 1408 288 1408H1248Q1367 1408 1451.5 1323.5Q1536 1239 1536 1120Z"/></svg>
<div class="card k3" style="left:1376px;top:603px;height:55px"><div class="tg on"><i></i></div><div class="lbl"><span class="t c" style="letter-spacing:-0.200px;transform:scaleX(0.9555)">Local In Policy</span></div></div>
<svg class="ic" style="left:1777px;top:619px;width:23px;height:22.5px" viewBox="0 -1408 1536 1536" preserveAspectRatio="none" ><path fill="#999" transform="scale(1,-1)" d="M1280 576V704Q1280 730 1261.0 749.0Q1242 768 1216 768H896V1088Q896 1114 877.0 1133.0Q858 1152 832 1152H704Q678 1152 659.0 1133.0Q640 1114 640 1088V768H320Q294 768 275.0 749.0Q256 730 256 704V576Q256 550 275.0 531.0Q294 512 320 512H640V192Q640 166 659.0 147.0Q678 128 704 128H832Q858 128 877.0 147.0Q896 166 896 192V512H1216Q1242 512 1261.0 531.0Q1280 550 1280 576ZM1536 1120V160Q1536 41 1451.5 -43.5Q1367 -128 1248 -128H288Q169 -128 84.5 -43.5Q0 41 0 160V1120Q0 1239 84.5 1323.5Q169 1408 288 1408H1248Q1367 1408 1451.5 1323.5Q1536 1239 1536 1120Z"/></svg>
<div class="card k3" style="left:1376px;top:665px;height:55px"><div class="tg"><i></i></div><div class="lbl"><span class="t c" style="letter-spacing:-0.353px">Local Out Routing</span></div></div>
<svg class="ic" style="left:1777px;top:681px;width:23px;height:22.5px" viewBox="0 -1408 1536 1536" preserveAspectRatio="none" ><path fill="#999" transform="scale(1,-1)" d="M1280 576V704Q1280 730 1261.0 749.0Q1242 768 1216 768H896V1088Q896 1114 877.0 1133.0Q858 1152 832 1152H704Q678 1152 659.0 1133.0Q640 1114 640 1088V768H320Q294 768 275.0 749.0Q256 730 256 704V576Q256 550 275.0 531.0Q294 512 320 512H640V192Q640 166 659.0 147.0Q678 128 704 128H832Q858 128 877.0 147.0Q896 166 896 192V512H1216Q1242 512 1261.0 531.0Q1280 550 1280 576ZM1536 1120V160Q1536 41 1451.5 -43.5Q1367 -128 1248 -128H288Q169 -128 84.5 -43.5Q0 41 0 160V1120Q0 1239 84.5 1323.5Q169 1408 288 1408H1248Q1367 1408 1451.5 1323.5Q1536 1239 1536 1120Z"/></svg>
<div class="card k3" style="left:1376px;top:727px;height:55px"><div class="tg"><i></i></div><div class="lbl"><span class="t c" style="letter-spacing:-0.056px">Multicast Policy</span></div></div>
<svg class="ic" style="left:1777px;top:743px;width:23px;height:22.5px" viewBox="0 -1408 1536 1536" preserveAspectRatio="none" ><path fill="#999" transform="scale(1,-1)" d="M1280 576V704Q1280 730 1261.0 749.0Q1242 768 1216 768H896V1088Q896 1114 877.0 1133.0Q858 1152 832 1152H704Q678 1152 659.0 1133.0Q640 1114 640 1088V768H320Q294 768 275.0 749.0Q256 730 256 704V576Q256 550 275.0 531.0Q294 512 320 512H640V192Q640 166 659.0 147.0Q678 128 704 128H832Q858 128 877.0 147.0Q896 166 896 192V512H1216Q1242 512 1261.0 531.0Q1280 550 1280 576ZM1536 1120V160Q1536 41 1451.5 -43.5Q1367 -128 1248 -128H288Q169 -128 84.5 -43.5Q0 41 0 160V1120Q0 1239 84.5 1323.5Q169 1408 288 1408H1248Q1367 1408 1451.5 1323.5Q1536 1239 1536 1120Z"/></svg>
<div class="card k3" style="left:1376px;top:789px;height:55px"><div class="tg on"><i></i></div><div class="lbl"><span class="t c" style="letter-spacing:-0.116px">Multiple Interface Policies</span></div></div>
<svg class="ic" style="left:1777px;top:805px;width:23px;height:22.5px" viewBox="0 -1408 1536 1536" preserveAspectRatio="none" ><path fill="#999" transform="scale(1,-1)" d="M1280 576V704Q1280 730 1261.0 749.0Q1242 768 1216 768H896V1088Q896 1114 877.0 1133.0Q858 1152 832 1152H704Q678 1152 659.0 1133.0Q640 1114 640 1088V768H320Q294 768 275.0 749.0Q256 730 256 704V576Q256 550 275.0 531.0Q294 512 320 512H640V192Q640 166 659.0 147.0Q678 128 704 128H832Q858 128 877.0 147.0Q896 166 896 192V512H1216Q1242 512 1261.0 531.0Q1280 550 1280 576ZM1536 1120V160Q1536 41 1451.5 -43.5Q1367 -128 1248 -128H288Q169 -128 84.5 -43.5Q0 41 0 160V1120Q0 1239 84.5 1323.5Q169 1408 288 1408H1248Q1367 1408 1451.5 1323.5Q1536 1239 1536 1120Z"/></svg>
<div class="card k3" style="left:1376px;top:851px;height:55px"><div class="tg on"><i></i></div><div class="lbl"><span class="t c" style="letter-spacing:-0.365px">Policy Advanced Options</span></div></div>
<svg class="ic" style="left:1777px;top:867px;width:23px;height:22.5px" viewBox="0 -1408 1536 1536" preserveAspectRatio="none" ><path fill="#999" transform="scale(1,-1)" d="M1280 576V704Q1280 730 1261.0 749.0Q1242 768 1216 768H896V1088Q896 1114 877.0 1133.0Q858 1152 832 1152H704Q678 1152 659.0 1133.0Q640 1114 640 1088V768H320Q294 768 275.0 749.0Q256 730 256 704V576Q256 550 275.0 531.0Q294 512 320 512H640V192Q640 166 659.0 147.0Q678 128 704 128H832Q858 128 877.0 147.0Q896 166 896 192V512H1216Q1242 512 1261.0 531.0Q1280 550 1280 576ZM1536 1120V160Q1536 41 1451.5 -43.5Q1367 -128 1248 -128H288Q169 -128 84.5 -43.5Q0 41 0 160V1120Q0 1239 84.5 1323.5Q169 1408 288 1408H1248Q1367 1408 1451.5 1323.5Q1536 1239 1536 1120Z"/></svg>
<div class="card k3" style="left:1376px;top:913px;height:55px"><div class="tg"><i></i></div><div class="lbl"><span class="t c" style="letter-spacing:-0.353px">Policy Disclaimer</span></div></div>
<svg class="ic" style="left:1777px;top:929px;width:23px;height:22.5px" viewBox="0 -1408 1536 1536" preserveAspectRatio="none" ><path fill="#999" transform="scale(1,-1)" d="M1280 576V704Q1280 730 1261.0 749.0Q1242 768 1216 768H896V1088Q896 1114 877.0 1133.0Q858 1152 832 1152H704Q678 1152 659.0 1133.0Q640 1114 640 1088V768H320Q294 768 275.0 749.0Q256 730 256 704V576Q256 550 275.0 531.0Q294 512 320 512H640V192Q640 166 659.0 147.0Q678 128 704 128H832Q858 128 877.0 147.0Q896 166 896 192V512H1216Q1242 512 1261.0 531.0Q1280 550 1280 576ZM1536 1120V160Q1536 41 1451.5 -43.5Q1367 -128 1248 -128H288Q169 -128 84.5 -43.5Q0 41 0 160V1120Q0 1239 84.5 1323.5Q169 1408 288 1408H1248Q1367 1408 1451.5 1323.5Q1536 1239 1536 1120Z"/></svg>
<div class="card k3" style="left:1376px;top:975px;height:55px"><div class="tg"><i></i></div><div class="lbl"><span class="t c" style="letter-spacing:-0.200px;transform:scaleX(0.9558)">Policy-based IPsec VPN</span></div></div>
<svg class="ic" style="left:1777px;top:991px;width:23px;height:22.5px" viewBox="0 -1408 1536 1536" preserveAspectRatio="none" ><path fill="#999" transform="scale(1,-1)" d="M1280 576V704Q1280 730 1261.0 749.0Q1242 768 1216 768H896V1088Q896 1114 877.0 1133.0Q858 1152 832 1152H704Q678 1152 659.0 1133.0Q640 1114 640 1088V768H320Q294 768 275.0 749.0Q256 730 256 704V576Q256 550 275.0 531.0Q294 512 320 512H640V192Q640 166 659.0 147.0Q678 128 704 128H832Q858 128 877.0 147.0Q896 166 896 192V512H1216Q1242 512 1261.0 531.0Q1280 550 1280 576ZM1536 1120V160Q1536 41 1451.5 -43.5Q1367 -128 1248 -128H288Q169 -128 84.5 -43.5Q0 41 0 160V1120Q0 1239 84.5 1323.5Q169 1408 288 1408H1248Q1367 1408 1451.5 1323.5Q1536 1239 1536 1120Z"/></svg>
<div class="card k3" style="left:1376px;top:1037px;height:55px"><div class="tg"><i></i></div><div class="lbl"><span class="t c" style="letter-spacing:-0.200px;transform:scaleX(0.9542)">Purdue Levels</span></div></div>
<svg class="ic" style="left:1777px;top:1053px;width:23px;height:22.5px" viewBox="0 -1408 1536 1536" preserveAspectRatio="none" ><path fill="#999" transform="scale(1,-1)" d="M1280 576V704Q1280 730 1261.0 749.0Q1242 768 1216 768H896V1088Q896 1114 877.0 1133.0Q858 1152 832 1152H704Q678 1152 659.0 1133.0Q640 1114 640 1088V768H320Q294 768 275.0 749.0Q256 730 256 704V576Q256 550 275.0 531.0Q294 512 320 512H640V192Q640 166 659.0 147.0Q678 128 704 128H832Q858 128 877.0 147.0Q896 166 896 192V512H1216Q1242 512 1261.0 531.0Q1280 550 1280 576ZM1536 1120V160Q1536 41 1451.5 -43.5Q1367 -128 1248 -128H288Q169 -128 84.5 -43.5Q0 41 0 160V1120Q0 1239 84.5 1323.5Q169 1408 288 1408H1248Q1367 1408 1451.5 1323.5Q1536 1239 1536 1120Z"/></svg>
<div class="card k3" style="left:1376px;top:1099px;height:55px"><div class="tg"><i></i></div><div class="lbl"><span class="t c" style="letter-spacing:-0.200px;transform:scaleX(0.9551)">Replacement Message Groups</span></div></div>
<svg class="ic" style="left:1777px;top:1115px;width:23px;height:22.5px" viewBox="0 -1408 1536 1536" preserveAspectRatio="none" ><path fill="#999" transform="scale(1,-1)" d="M1280 576V704Q1280 730 1261.0 749.0Q1242 768 1216 768H896V1088Q896 1114 877.0 1133.0Q858 1152 832 1152H704Q678 1152 659.0 1133.0Q640 1114 640 1088V768H320Q294 768 275.0 749.0Q256 730 256 704V576Q256 550 275.0 531.0Q294 512 320 512H640V192Q640 166 659.0 147.0Q678 128 704 128H832Q858 128 877.0 147.0Q896 166 896 192V512H1216Q1242 512 1261.0 531.0Q1280 550 1280 576ZM1536 1120V160Q1536 41 1451.5 -43.5Q1367 -128 1248 -128H288Q169 -128 84.5 -43.5Q0 41 0 160V1120Q0 1239 84.5 1323.5Q169 1408 288 1408H1248Q1367 1408 1451.5 1323.5Q1536 1239 1536 1120Z"/></svg>
<div class="card k3" style="left:1376px;top:1161px;height:55px"><div class="tg"><i></i></div><div class="lbl"><span class="t c" style="letter-spacing:-0.194px">SD-WAN Interface</span></div></div>
<svg class="ic" style="left:1777px;top:1177px;width:23px;height:22.5px" viewBox="0 -1408 1536 1536" preserveAspectRatio="none" ><path fill="#999" transform="scale(1,-1)" d="M1280 576V704Q1280 730 1261.0 749.0Q1242 768 1216 768H896V1088Q896 1114 877.0 1133.0Q858 1152 832 1152H704Q678 1152 659.0 1133.0Q640 1114 640 1088V768H320Q294 768 275.0 749.0Q256 730 256 704V576Q256 550 275.0 531.0Q294 512 320 512H640V192Q640 166 659.0 147.0Q678 128 704 128H832Q858 128 877.0 147.0Q896 166 896 192V512H1216Q1242 512 1261.0 531.0Q1280 550 1280 576ZM1536 1120V160Q1536 41 1451.5 -43.5Q1367 -128 1248 -128H288Q169 -128 84.5 -43.5Q0 41 0 160V1120Q0 1239 84.5 1323.5Q169 1408 288 1408H1248Q1367 1408 1451.5 1323.5Q1536 1239 1536 1120Z"/></svg>
<div class="card" style="left:1376px;top:1223px;height:80px"><div class="tg"><i></i></div><div class="lbl ml"><span class="t c" style="letter-spacing:-0.319px">Application Detection-Based SD-</span><span class="t c" style="letter-spacing:1.446px">WAN</span></div></div>
<svg class="ic" style="left:1777px;top:1239px;width:23px;height:22.5px" viewBox="0 -1408 1536 1536" preserveAspectRatio="none" ><path fill="#999" transform="scale(1,-1)" d="M1280 576V704Q1280 730 1261.0 749.0Q1242 768 1216 768H896V1088Q896 1114 877.0 1133.0Q858 1152 832 1152H704Q678 1152 659.0 1133.0Q640 1114 640 1088V768H320Q294 768 275.0 749.0Q256 730 256 704V576Q256 550 275.0 531.0Q294 512 320 512H640V192Q640 166 659.0 147.0Q678 128 704 128H832Q858 128 877.0 147.0Q896 166 896 192V512H1216Q1242 512 1261.0 531.0Q1280 550 1280 576ZM1536 1120V160Q1536 41 1451.5 -43.5Q1367 -128 1248 -128H288Q169 -128 84.5 -43.5Q0 41 0 160V1120Q0 1239 84.5 1323.5Q169 1408 288 1408H1248Q1367 1408 1451.5 1323.5Q1536 1239 1536 1120Z"/></svg>
<div class="card" style="left:1376px;top:1311px;height:54px"><div class="tg"><i></i></div><div class="lbl"><span class="t c" style="letter-spacing:-0.200px;transform:scaleX(0.9374)">SSL-VPN Personal Bookmark</span></div></div>
<svg class="ic" style="left:1777px;top:1327px;width:23px;height:22.5px" viewBox="0 -1408 1536 1536" preserveAspectRatio="none" ><path fill="#999" transform="scale(1,-1)" d="M1280 576V704Q1280 730 1261.0 749.0Q1242 768 1216 768H896V1088Q896 1114 877.0 1133.0Q858 1152 832 1152H704Q678 1152 659.0 1133.0Q640 1114 640 1088V768H320Q294 768 275.0 749.0Q256 730 256 704V576Q256 550 275.0 531.0Q294 512 320 512H640V192Q640 166 659.0 147.0Q678 128 704 128H832Q858 128 877.0 147.0Q896 166 896 192V512H1216Q1242 512 1261.0 531.0Q1280 550 1280 576ZM1536 1120V160Q1536 41 1451.5 -43.5Q1367 -128 1248 -128H288Q169 -128 84.5 -43.5Q0 41 0 160V1120Q0 1239 84.5 1323.5Q169 1408 288 1408H1248Q1367 1408 1451.5 1323.5Q1536 1239 1536 1120Z"/></svg>
<div class="card" style="left:1376px;top:1373px;height:54px"><div class="tg on"><i></i></div><div class="lbl"><span class="t c" style="letter-spacing:-0.200px;transform:scaleX(0.8976)">SSL-VPN Realms</span></div></div>
<svg class="ic" style="left:1777px;top:1389px;width:23px;height:22.5px" viewBox="0 -1408 1536 1536" preserveAspectRatio="none" ><path fill="#999" transform="scale(1,-1)" d="M1280 576V704Q1280 730 1261.0 749.0Q1242 768 1216 768H896V1088Q896 1114 877.0 1133.0Q858 1152 832 1152H704Q678 1152 659.0 1133.0Q640 1114 640 1088V768H320Q294 768 275.0 749.0Q256 730 256 704V576Q256 550 275.0 531.0Q294 512 320 512H640V192Q640 166 659.0 147.0Q678 128 704 128H832Q858 128 877.0 147.0Q896 166 896 192V512H1216Q1242 512 1261.0 531.0Q1280 550 1280 576ZM1536 1120V160Q1536 41 1451.5 -43.5Q1367 -128 1248 -128H288Q169 -128 84.5 -43.5Q0 41 0 160V1120Q0 1239 84.5 1323.5Q169 1408 288 1408H1248Q1367 1408 1451.5 1323.5Q1536 1239 1536 1120Z"/></svg>
<div class="badge" style="left:1340.1px;top:1380.1px">3</div>
</div>
</body></html>
